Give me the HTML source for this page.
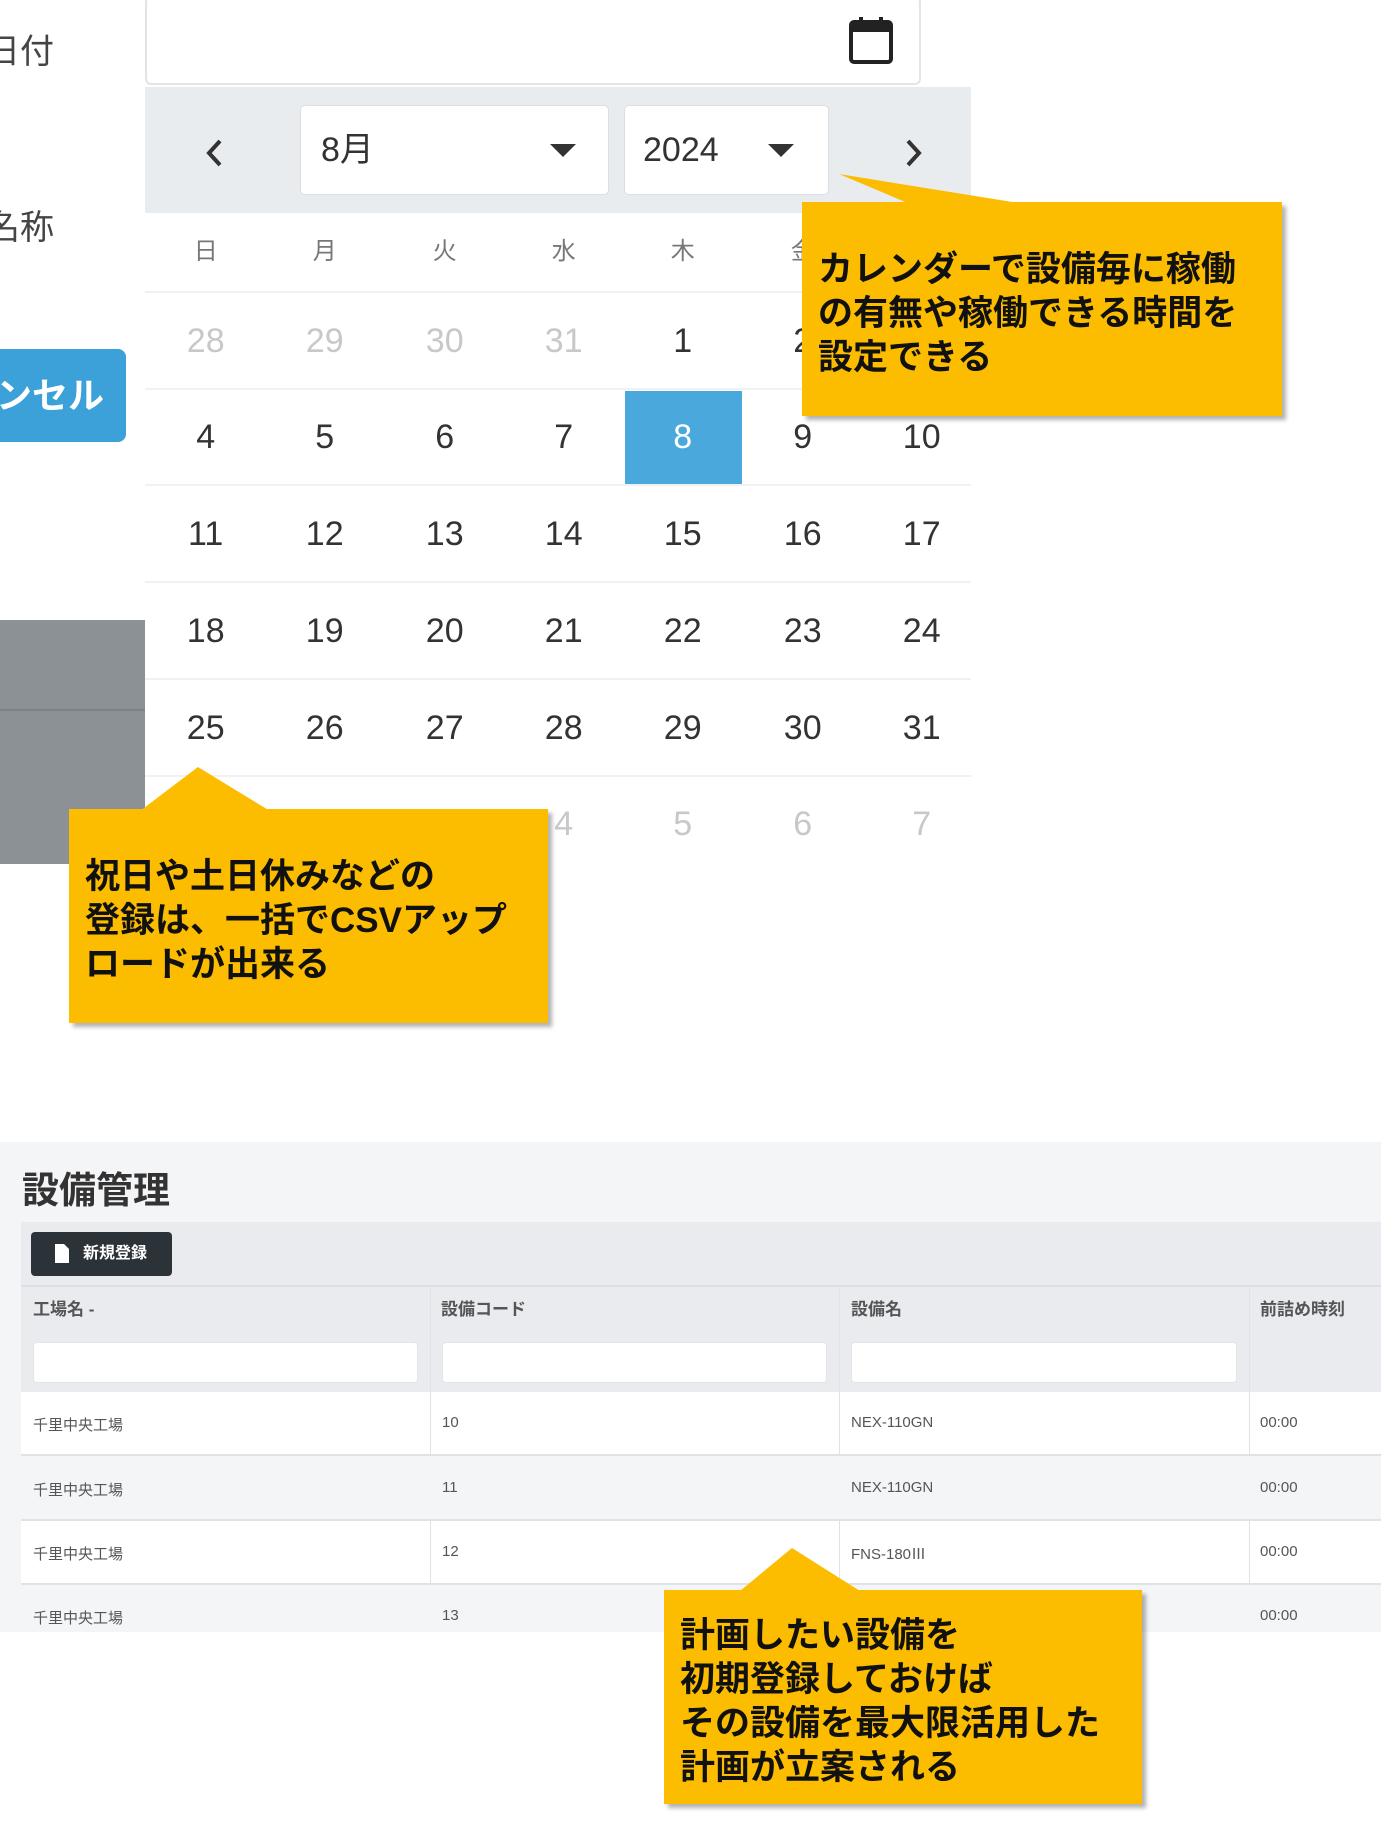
<!DOCTYPE html>
<html><head><meta charset="utf-8"><style>
*{margin:0;padding:0;box-sizing:border-box}
body{width:1381px;height:1825px;background:#fff;position:relative;overflow:hidden;font-family:"Liberation Sans","Noto Sans CJK JP",sans-serif;color:#333}
.a{position:absolute}
.cell{position:absolute;width:119.4px;text-align:center;font-size:34px;line-height:40px}
.g{color:#c8c8c8}
.co{position:absolute;background:#fcbc00;box-shadow:4px 4px 4px rgba(0,0,0,.3);font-size:35px;font-weight:bold;color:#111;line-height:44px;padding:46px 16px 18px;letter-spacing:0}
.hl{position:absolute;left:145px;width:826px;height:2px;background:#f0f1f2}
.th{position:absolute;top:1295px;font-size:17px;font-weight:bold;color:#555}
.td{position:absolute;font-size:15px;color:#555}
.fi{position:absolute;top:1342px;height:41px;background:#fff;border-radius:4px;border:1px solid #e3e5e8}
</style></head><body>
<div class="a" style="left:-14px;top:24px;font-size:34px;color:#444">日付</div>
<div class="a" style="left:-14px;top:200px;font-size:34px;color:#444">名称</div>
<div class="a" style="left:-20px;top:349px;width:146px;height:93px;background:#3ca0d9;border-radius:8px;color:#fff;font-size:36px;font-weight:bold;line-height:93px;padding-left:16px">ンセル</div>
<div class="a" style="left:0;top:620px;width:145px;height:244px;background:#8c9195"></div>
<div class="a" style="left:0;top:709px;width:145px;height:2px;background:#7d8286"></div>
<div class="a" style="left:145px;top:-4px;width:776px;height:89px;border:2px solid #e2e4e6;border-radius:6px;background:#fff"></div>
<svg class="a" style="left:848px;top:16px" width="48" height="50" viewBox="0 0 48 50"><rect x="3" y="6" width="40" height="40" rx="3" fill="none" stroke="#222" stroke-width="4"/><rect x="3" y="6" width="40" height="10" fill="#222"/><rect x="11" y="1" width="4" height="8" fill="#222"/><rect x="31" y="1" width="4" height="8" fill="#222"/></svg>
<div class="a" style="left:145px;top:87px;width:826px;height:126px;background:#e9ecef"></div>
<div class="a" style="left:145px;top:213px;width:826px;height:620px;background:#fff"></div>
<div class="a" style="left:300px;top:105px;width:309px;height:90px;background:#fff;border:1px solid #dcdfe2;border-radius:5px;font-size:34px;line-height:88px;padding-left:20px">8月</div>
<div class="a" style="left:624px;top:105px;width:205px;height:90px;background:#fff;border:1px solid #dcdfe2;border-radius:5px;font-size:34px;line-height:88px;padding-left:18px">2024</div>
<svg class="a" style="left:550px;top:144px" width="26" height="14"><path d="M0 0H26L13 13Z" fill="#333"/></svg>
<svg class="a" style="left:768px;top:144px" width="26" height="14"><path d="M0 0H26L13 13Z" fill="#333"/></svg>
<svg class="a" style="left:204px;top:138px" width="20" height="30"><path d="M16 3L5 15L16 27" fill="none" stroke="#333" stroke-width="4"/></svg>
<svg class="a" style="left:904px;top:138px" width="20" height="30"><path d="M4 3L15 15L4 27" fill="none" stroke="#333" stroke-width="4"/></svg>
<div class="cell" style="left:146px;top:232px;font-size:24px;color:#777">日</div>
<div class="cell" style="left:265px;top:232px;font-size:24px;color:#777">月</div>
<div class="cell" style="left:385px;top:232px;font-size:24px;color:#777">火</div>
<div class="cell" style="left:504px;top:232px;font-size:24px;color:#777">水</div>
<div class="cell" style="left:623px;top:232px;font-size:24px;color:#777">木</div>
<div class="cell" style="left:743px;top:232px;font-size:24px;color:#777">金</div>
<div class="hl" style="top:291px"></div><div class="hl" style="top:388px"></div><div class="hl" style="top:484px"></div><div class="hl" style="top:581px"></div><div class="hl" style="top:678px"></div><div class="hl" style="top:775px"></div>
<div class="a" style="left:625px;top:391px;width:117px;height:93px;background:#4aa8dc"></div>
<div class="cell g" style="left:146px;top:321px">28</div><div class="cell g" style="left:265px;top:321px">29</div><div class="cell g" style="left:385px;top:321px">30</div><div class="cell g" style="left:504px;top:321px">31</div><div class="cell" style="left:623px;top:321px">1</div><div class="cell" style="left:743px;top:321px">2</div>
<div class="cell" style="left:146px;top:417px">4</div><div class="cell" style="left:265px;top:417px">5</div><div class="cell" style="left:385px;top:417px">6</div><div class="cell" style="left:504px;top:417px">7</div><div class="cell" style="left:623px;top:417px;color:#fff">8</div><div class="cell" style="left:743px;top:417px">9</div><div class="cell" style="left:862px;top:417px">10</div>
<div class="cell" style="left:146px;top:514px">11</div><div class="cell" style="left:265px;top:514px">12</div><div class="cell" style="left:385px;top:514px">13</div><div class="cell" style="left:504px;top:514px">14</div><div class="cell" style="left:623px;top:514px">15</div><div class="cell" style="left:743px;top:514px">16</div><div class="cell" style="left:862px;top:514px">17</div>
<div class="cell" style="left:146px;top:611px">18</div><div class="cell" style="left:265px;top:611px">19</div><div class="cell" style="left:385px;top:611px">20</div><div class="cell" style="left:504px;top:611px">21</div><div class="cell" style="left:623px;top:611px">22</div><div class="cell" style="left:743px;top:611px">23</div><div class="cell" style="left:862px;top:611px">24</div>
<div class="cell" style="left:146px;top:708px">25</div><div class="cell" style="left:265px;top:708px">26</div><div class="cell" style="left:385px;top:708px">27</div><div class="cell" style="left:504px;top:708px">28</div><div class="cell" style="left:623px;top:708px">29</div><div class="cell" style="left:743px;top:708px">30</div><div class="cell" style="left:862px;top:708px">31</div>
<div class="cell g" style="left:504px;top:804px">4</div><div class="cell g" style="left:623px;top:804px">5</div><div class="cell g" style="left:743px;top:804px">6</div><div class="cell g" style="left:862px;top:804px">7</div>
<svg class="a" style="left:830px;top:170px" width="200" height="40"><path d="M9 4L80 34H195Z" fill="#fcbc00"/></svg>
<div class="co" style="left:802px;top:202px;width:480px;height:214px">カレンダーで設備毎に稼働<br>の有無や稼働できる時間を<br>設定できる</div>
<svg class="a" style="left:140px;top:764px" width="140" height="48"><path d="M58 3L0 47H130Z" fill="#fcbc00"/></svg>
<div class="co" style="left:69px;top:809px;width:479px;height:214px">祝日や土日休みなどの<br>登録は、一括でCSVアップ<br>ロードが出来る</div>
<div class="a" style="left:0;top:1142px;width:1381px;height:490px;background:#f4f5f7"></div>
<div class="a" style="left:22px;top:1160px;font-size:37px;font-weight:bold;color:#333">設備管理</div>
<div class="a" style="left:21px;top:1222px;width:1360px;height:410px;background:#fff"></div>
<div class="a" style="left:21px;top:1222px;width:1360px;height:170px;background:#e9ebee"></div>
<div class="a" style="left:21px;top:1285px;width:1360px;height:2px;background:#dcdfe3"></div>
<div class="a" style="left:31px;top:1232px;width:141px;height:44px;background:#2b3339;border-radius:4px;color:#fff;font-size:16px;font-weight:bold;line-height:44px;padding-left:52px">新規登録</div>
<svg class="a" style="left:55px;top:1244px" width="14" height="19"><path d="M0 0H9L14 5V19H0Z" fill="#fff"/></svg>
<div class="a" style="left:430px;top:1287px;width:1px;height:345px;background:#e0e2e5"></div>
<div class="a" style="left:839px;top:1287px;width:1px;height:345px;background:#e0e2e5"></div>
<div class="a" style="left:1249px;top:1287px;width:1px;height:345px;background:#e0e2e5"></div>
<div class="th" style="left:33px">工場名 -</div><div class="th" style="left:441px">設備コード</div><div class="th" style="left:851px">設備名</div><div class="th" style="left:1260px">前詰め時刻</div>
<div class="fi" style="left:33px;width:385px"></div><div class="fi" style="left:442px;width:385px"></div><div class="fi" style="left:851px;width:386px"></div>
<div class="a" style="left:21px;top:1455px;width:1360px;height:65px;background:#f4f5f7"></div>
<div class="a" style="left:21px;top:1584px;width:1360px;height:48px;background:#f4f5f7"></div>
<div class="a" style="left:21px;top:1454px;width:1360px;height:2px;background:#e0e2e5"></div>
<div class="a" style="left:21px;top:1519px;width:1360px;height:2px;background:#e0e2e5"></div>
<div class="a" style="left:21px;top:1583px;width:1360px;height:2px;background:#e0e2e5"></div>
<div class="td" style="left:33px;top:1414px">千里中央工場</div><div class="td" style="left:442px;top:1414px">10</div><div class="td" style="left:851px;top:1414px">NEX-110GN</div><div class="td" style="left:1260px;top:1414px">00:00</div>
<div class="td" style="left:33px;top:1479px">千里中央工場</div><div class="td" style="left:442px;top:1479px">11</div><div class="td" style="left:851px;top:1479px">NEX-110GN</div><div class="td" style="left:1260px;top:1479px">00:00</div>
<div class="td" style="left:33px;top:1543px">千里中央工場</div><div class="td" style="left:442px;top:1543px">12</div><div class="td" style="left:851px;top:1543px">FNS-180Ⅲ</div><div class="td" style="left:1260px;top:1543px">00:00</div>
<div class="td" style="left:33px;top:1607px">千里中央工場</div><div class="td" style="left:442px;top:1607px">13</div><div class="td" style="left:1260px;top:1607px">00:00</div>
<svg class="a" style="left:730px;top:1546px" width="140" height="46"><path d="M62 2L10 45H130Z" fill="#fcbc00"/></svg>
<div class="co" style="left:664px;top:1590px;width:478px;height:214px;padding-top:24px">計画したい設備を<br>初期登録しておけば<br>その設備を最大限活用した<br>計画が立案される</div>
</body></html>
